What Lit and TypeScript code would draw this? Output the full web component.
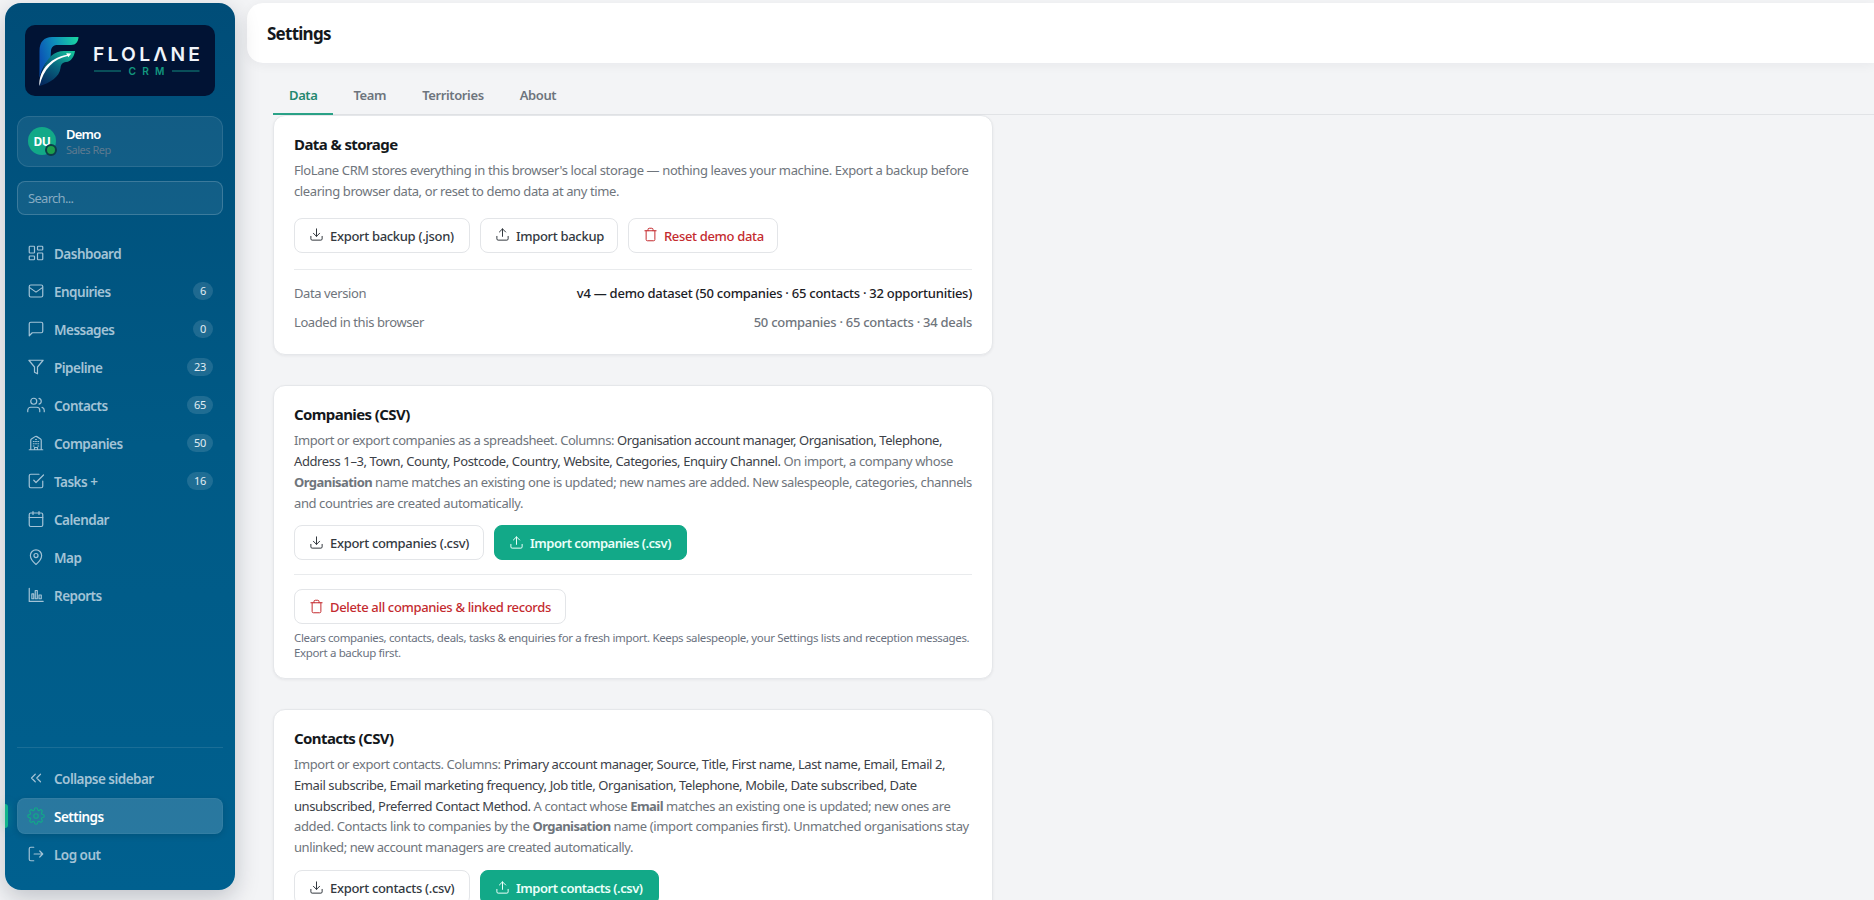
import { LitElement, html, css, svg, nothing, type TemplateResult } from "lit";
import { customElement, property } from "lit/decorators.js";
import { classMap } from "lit/directives/class-map.js";

const ICONS: Record<string, TemplateResult> = {
  dashboard: svg`<rect x="3" y="3" width="7" height="9" rx="1"/><rect x="14" y="3" width="7" height="5" rx="1"/><rect x="14" y="12" width="7" height="9" rx="1"/><rect x="3" y="16" width="7" height="5" rx="1"/>`,
  mail: svg`<rect x="3" y="4" width="18" height="16" rx="2"/><path d="m3.5 7.5 8.5 6 8.5-6"/>`,
  message: svg`<path d="M21 15a2 2 0 0 1-2 2H7l-4 4V5a2 2 0 0 1 2-2h14a2 2 0 0 1 2 2z"/>`,
  funnel: svg`<path d="M21.500 3h-19l7.500 9v7l4 2v-9z"/>`,
  users: svg`<path d="M17 21v-2a4 4 0 0 0-4-4H5a4 4 0 0 0-4 4v2"/><circle cx="9" cy="7" r="4"/><path d="M23 21v-2a4 4 0 0 0-3-3.87M16 3.13a4 4 0 0 1 0 7.75"/>`,
  building: svg`<path d="M3 21h18M5 21V8.500a2 2 0 0 1 .9-1.700l4.900-3.300a2.200 2.200 0 0 1 2.400 0l4.900 3.300a2 2 0 0 1 .9 1.700V21M10 21v-3h4v3M8.500 10h1M11.500 10h1M14.500 10h1M8.500 13h1M11.500 13h1M14.500 13h1M8.500 16h1M14.500 16h1M11.500 7.300h1"/>`,
  task: svg`<path d="m9 11 3 3L22 4"/><path d="M21 12v7a2 2 0 0 1-2 2H5a2 2 0 0 1-2-2V5a2 2 0 0 1 2-2h11"/>`,
  calendar: svg`<rect x="3" y="4" width="18" height="18" rx="2"/><path d="M16 2v4M8 2v4M3 10h18"/>`,
  pin: svg`<path d="M19.500 10c0 5.500-7.500 12-7.500 12S4.500 15.500 4.500 10a7.500 7.500 0 0 1 15 0z"/><circle cx="12" cy="10" r="2.700"/>`,
  chart: svg`<path d="M3 3v17.500h18.500"/><rect x="6.500" y="10.500" width="2.500" height="6.500"/><rect x="11" y="6" width="2.700" height="11"/><rect x="16" y="12" width="3" height="5"/>`,
  collapse: svg`<path d="m11 17-5-5 5-5M18 17l-5-5 5-5"/>`,
  gear: svg`<circle cx="12" cy="12" r="3"/><path d="M19.4 15a1.65 1.65 0 0 0 .33 1.82l.06.06a2 2 0 1 1-2.83 2.83l-.06-.06a1.65 1.65 0 0 0-2.8 1.17V21a2 2 0 1 1-4 0v-.09A1.65 1.65 0 0 0 9 19.4a1.65 1.65 0 0 0-1.82.33l-.06.06a2 2 0 1 1-2.83-2.83l.06-.06a1.65 1.65 0 0 0-1.17-2.8H3a2 2 0 1 1 0-4h.09A1.65 1.65 0 0 0 4.6 9a1.65 1.65 0 0 0-.33-1.82l-.06-.06a2 2 0 1 1 2.83-2.83l.06.06A1.65 1.65 0 0 0 9 4.6h.08A1.65 1.65 0 0 0 10 3.09V3a2 2 0 1 1 4 0v.09a1.65 1.65 0 0 0 2.82 1.18l.06-.06a2 2 0 1 1 2.83 2.83l-.06.06A1.65 1.65 0 0 0 19.4 9v.08A1.65 1.65 0 0 0 20.91 10H21a2 2 0 1 1 0 4h-.09a1.65 1.65 0 0 0-1.51 1z"/>`,
  logout: svg`<path d="M9 21H5a2 2 0 0 1-2-2V5a2 2 0 0 1 2-2h4M17 8l4 4-4 4M21 12H9.500"/>`,
  download: svg`<path d="M21 15v4a2 2 0 0 1-2 2H5a2 2 0 0 1-2-2v-4M7 10l5 5 5-5M12 15V3"/>`,
  upload: svg`<path d="M21 15v4a2 2 0 0 1-2 2H5a2 2 0 0 1-2-2v-4M17 8l-5-5-5 5M12 3v12"/>`,
  trash: svg`<path d="M3 6h18M5 6v14a2 2 0 0 0 2 2h10a2 2 0 0 0 2-2V6M8 6V4a2 2 0 0 1 2-2h4a2 2 0 0 1 2 2v2"/>`,
};

@customElement("ui-icon")
export class UiIcon extends LitElement {
  @property() name = "";
  static styles = css`
    :host { display: block; flex: none; width: 18px; height: 18px; }
    svg { display: block; width: 100%; height: 100%; fill: none; stroke: currentColor; stroke-width: 1.6; stroke-linecap: round; stroke-linejoin: round; }
  `;
  render() {
    return html`<svg viewBox="0 0 24 24">${ICONS[this.name] ?? nothing}</svg>`;
  }
}

@customElement("brand-logo")
export class BrandLogo extends LitElement {
  static styles = css`
    :host { display: block; width: 190px; height: 71px; border-radius: 10px; background: #011334; }
    svg { display: block; }
    .word { font: 600 19.3px Inter, sans-serif; fill: #f1f5fb; }
    .sub { font: 600 10.2px Inter, sans-serif; fill: #13977f; }
    .rule { stroke: #0c6466; stroke-width: 1.4; }
    .swoosh { fill: #fff; }
  `;
  render() {
    return html`<svg width="190" height="71" viewBox="25 25 190 71">
      <defs>
        <linearGradient id="top" x1="0" y1="0.5" x2="1" y2="0.2">
          <stop offset="0" stop-color="#0b52b4"/><stop offset=".45" stop-color="#0e8dbb"/><stop offset="1" stop-color="#19d3a2"/>
        </linearGradient>
        <linearGradient id="leg" x1="0.2" y1="1" x2="0.9" y2="0">
          <stop offset="0" stop-color="#052a5e"/><stop offset=".5" stop-color="#08667f"/><stop offset="1" stop-color="#14c39b"/>
        </linearGradient>
      </defs>
      <path fill="url(#top)" d="M39.500 78V51C39.500 42 44 37 52 37H78.500C78.300 41.500 76 45 71 45H58C53.500 45 51.500 47 51 50.500L50.500 58.500C45 62.500 41.500 69 39.500 78Z"/>
      <path fill="url(#leg)" d="M51 56C55 52.500 59 51 64 51H75C74 57 71 61.500 66 62C62 62.500 61 64.500 60.500 68C59.500 77 50 83 39.500 86C40 76 43 64 51 56Z"/>
      <path class="swoosh" d="M39.500 86C38.500 72 48 58.500 67 54.700L66.200 53.300L71.300 53.400L68.300 57.300L67.600 56C53.500 59 43.500 69 39.500 86Z"/>
      <text class="word" x="93" y="61" textLength="107">FLOLΛNE</text>
      <text class="sub" x="128.5" y="74.700" textLength="36">CRM</text>
      <path class="rule" d="M94 71h27M172 71h27.500"/>
    </svg>`;
  }
}

interface NavEntry { icon: string; label: string; badge?: string; active?: boolean; }

const MAIN_NAV: NavEntry[] = [
  { icon: "dashboard", label: "Dashboard" },
  { icon: "mail", label: "Enquiries", badge: "6" },
  { icon: "message", label: "Messages", badge: "0" },
  { icon: "funnel", label: "Pipeline", badge: "23" },
  { icon: "users", label: "Contacts", badge: "65" },
  { icon: "building", label: "Companies", badge: "50" },
  { icon: "task", label: "Tasks +", badge: "16" },
  { icon: "calendar", label: "Calendar" },
  { icon: "pin", label: "Map" },
  { icon: "chart", label: "Reports" },
];

const FOOT_NAV: NavEntry[] = [
  { icon: "collapse", label: "Collapse sidebar" },
  { icon: "gear", label: "Settings", active: true },
  { icon: "logout", label: "Log out" },
];

@customElement("app-sidebar")
export class AppSidebar extends LitElement {
  static styles = css`
    :host {
      display: flex; flex-direction: column; box-sizing: border-box; width: 230px; height: 887px; margin: 3px 0 0 5px;
      padding: 22px 12px 18px; border-radius: 16px; background: linear-gradient(180deg, #004d78, #005a86 50%, #00608f);
      box-shadow: 0 8px 24px rgba(15, 23, 42, .22); color: #a3c3d6; position: relative; z-index: 2;
    }
    brand-logo { margin: 0 8px; }
    .profile {
      display: flex; align-items: center; gap: 10px; box-sizing: border-box; height: 51px; margin-top: 20px; padding: 0 10px 1px;
      border: 1px solid rgba(255, 255, 255, .1); border-radius: 12px; background: rgba(255, 255, 255, .07);
    }
    .avatar {
      position: relative; display: grid; place-items: center; width: 28px; height: 28px; border-radius: 50%;
      background: #12a988; color: #fff; font-weight: 700; font-size: 12px; letter-spacing: -.4px;
    }
    .dot { position: absolute; right: -1px; bottom: -1px; width: 8px; height: 8px; border: 2px solid #0c3d4a; border-radius: 50%; background: #1d9e4b; }
    .name { color: #fff; font-weight: 600; font-size: 13px; line-height: 17px; letter-spacing: -.8px; }
    .role { color: #5d7a90; font-size: 11px; line-height: 14px; letter-spacing: -.5px; }
    .search {
      display: flex; align-items: center; box-sizing: border-box; height: 34px; margin: 14px 0 20px; padding: 0 10px;
      border: 1px solid rgba(255, 255, 255, .18); border-radius: 8px; background: rgba(255, 255, 255, .07);
      color: #86abc2; font-size: 13px; letter-spacing: -.7px;
    }
    .nav { display: flex; flex-direction: column; gap: 2px; }
    .foot { margin-top: auto; padding-top: 12px; border-top: 1px solid rgba(255, 255, 255, .1); }
    .item { position: relative; display: flex; align-items: center; box-sizing: border-box; height: 36px; padding: 0 10px 0 9.5px; border-radius: 8px; }
    .label { flex: 1; padding: 1px 0 0 9.5px; font-weight: 600; font-size: 13.5px; letter-spacing: -.52px; white-space: nowrap; }
    .badge { min-width: 6px; padding: 0 7px; border-radius: 9px; background: rgba(255, 255, 255, .12); color: #e2edf4; font-size: 11px; line-height: 18px; letter-spacing: -.3px; text-align: center; }
    .active { background: rgba(255, 255, 255, .16); box-shadow: 0 2px 6px rgba(0, 0, 0, .12), inset 0 0 0 1px rgba(255, 255, 255, .05); color: #fff; }
    .active ui-icon { color: #12a988; }
    .active::before { content: ""; position: absolute; left: -12px; top: 6px; width: 3px; height: 24px; border-radius: 0 3px 3px 0; background: #12b48c; box-shadow: 0 0 8px rgba(18, 180, 140, .5); }
  `;
  private item(e: NavEntry) {
    return html`<div class=${classMap({ item: true, active: !!e.active })}>
      <ui-icon name=${e.icon}></ui-icon><span class="label">${e.label}</span>
      ${e.badge ? html`<span class="badge">${e.badge}</span>` : nothing}
    </div>`;
  }
  render() {
    return html`
      <brand-logo></brand-logo>
      <div class="profile">
        <div class="avatar">DU<i class="dot"></i></div>
        <div><div class="name">Demo</div><div class="role">Sales Rep</div></div>
      </div>
      <div class="search">Search...</div>
      <div class="nav">${MAIN_NAV.map((e) => this.item(e))}</div>
      <div class="nav foot">${FOOT_NAV.map((e) => this.item(e))}</div>
    `;
  }
}

@customElement("action-button")
export class ActionButton extends LitElement {
  @property() icon = "";
  @property({ reflect: true }) kind = "plain";
  @property({ type: Number }) width = 0;
  static styles = css`
    :host { display: block; }
    .btn {
      display: flex; align-items: center; justify-content: flex-start; gap: 6.3px; box-sizing: border-box; height: 35px; padding: 0 0 0 13.7px;
      border: 1px solid #e3e5e8; border-radius: 8px; background: #fff; color: #33393f;
      font-weight: 500; font-size: 13px; letter-spacing: -.32px; white-space: nowrap;
    }
    ui-icon { width: 15px; height: 15px; margin-top: -1px; }
    .text { padding-top: 1px; }
    .danger { color: #c42b2f; letter-spacing: -.34px; }
    .primary { border-color: #12a988; background: #12a988; color: #eafff9; font-weight: 600; letter-spacing: -.48px; }
  `;
  render() {
    return html`<div class="btn ${this.kind}" style="width:${this.width}px">
      <ui-icon name=${this.icon}></ui-icon><span class="text"><slot></slot></span>
    </div>`;
  }
}

@customElement("settings-page")
export class SettingsPage extends LitElement {
  static styles = css`
    :host { display: block; flex: 1; min-width: 0; }
    .header {
      display: flex; align-items: center; box-sizing: border-box; height: 60px; margin: 3px 0 0 12px; padding: 1px 20px 0;
      border-radius: 16px 0 0 16px; background: #fff; box-shadow: 0 2px 12px rgba(15, 23, 42, .05);
      color: #14181c; font-weight: 700; font-size: 17px; letter-spacing: -.75px;
    }
    .body { padding: 12px 0 0 38px; }
    .tabs { display: flex; gap: 4px; box-sizing: border-box; height: 40px; border-bottom: 1px solid #e1e3e6; }
    .tab { box-sizing: border-box; height: 40px; padding: 11px 16px 0; border-bottom: 2px solid transparent; color: #6d747d; font-weight: 600; font-size: 13px; line-height: 18px; letter-spacing: -.38px; }
    .selected { border-color: #2aa287; color: #23876f; }
    .cards { display: flex; flex-direction: column; gap: 30.2px; width: 720px; }
    .card { box-sizing: border-box; padding: 20px 20px 18px; border: 1px solid #e5e7ea; border-radius: 12px; background: #fff; box-shadow: 0 1px 3px rgba(15, 23, 42, .06); }
    .title { color: #14181c; font-weight: 700; font-size: 15px; line-height: 16px; letter-spacing: -.59px; }
    .copy { margin-top: 8px; color: #6f757c; font-size: 13px; line-height: 20.8px; white-space: nowrap; }
    .line { display: block; }
    .cols { color: #3c4148; }
    b { font-weight: 700; letter-spacing: -.55px; }
    .row { display: flex; gap: 10px; margin-top: 12px; }
    .roomy { margin-top: 16.4px; }
    .rule { height: 1px; margin: 14px 0; background: #e9ebed; }
    .fact { display: flex; justify-content: space-between; height: 29px; align-items: center; color: #6f757c; font-size: 13px; letter-spacing: -.41px; }
    .facts { margin: 16px 0 -.5px; padding: 8.5px 0 0; border-top: 1px solid #e9ebed; }
    .value { font-weight: 500; letter-spacing: -.27px; }
    .strong { color: #1c2126; letter-spacing: -.25px; }
    .note { margin-top: 5.5px; color: #6b7280; font-size: 11.5px; line-height: 15px; letter-spacing: -.355px; white-space: nowrap; }
  `;
  private line(tracking: number, text: unknown) {
    return html`<span class="line" style="letter-spacing:${tracking}px">${text}</span>`;
  }
  render() {
    return html`
      <div class="header">Settings</div>
      <div class="body">
        <div class="tabs">
          <div class="tab selected">Data</div><div class="tab">Team</div><div class="tab">Territories</div><div class="tab">About</div>
        </div>
        <div class="cards">
          <section class="card">
            <div class="title">Data &amp; storage</div>
            <div class="copy">
              ${this.line(-0.377, "FloLane CRM stores everything in this browser's local storage — nothing leaves your machine. Export a backup before")}
              ${this.line(-0.394, "clearing browser data, or reset to demo data at any time.")}
            </div>
            <div class="row roomy">
              <action-button icon="download" width="176">Export backup (.json)</action-button>
              <action-button icon="upload" width="138">Import backup</action-button>
              <action-button icon="trash" kind="danger" width="150">Reset demo data</action-button>
            </div>
            <div class="facts">
              <div class="fact">Data version<span class="value strong">v4 — demo dataset (50 companies · 65 contacts · 32 opportunities)</span></div>
              <div class="fact">Loaded in this browser<span class="value">50 companies · 65 contacts · 34 deals</span></div>
            </div>
          </section>
          <section class="card">
            <div class="title">Companies (CSV)</div>
            <div class="copy">
              ${this.line(-0.433, html`Import or export companies as a spreadsheet. Columns: <span class="cols">Organisation account manager, Organisation, Telephone,</span>`)}
              ${this.line(-0.4, html`<span class="cols">Address 1–3, Town, County, Postcode, Country, Website, Categories, Enquiry Channel.</span> On import, a company whose`)}
              ${this.line(-0.412, html`<b>Organisation</b> name matches an existing one is updated; new names are added. New salespeople, categories, channels`)}
              ${this.line(-0.398, "and countries are created automatically.")}
            </div>
            <div class="row">
              <action-button icon="download" width="190">Export companies (.csv)</action-button>
              <action-button icon="upload" kind="primary" width="193">Import companies (.csv)</action-button>
            </div>
            <div class="rule"></div>
            <action-button icon="trash" kind="danger" width="272">Delete all companies &amp; linked records</action-button>
            <div class="note">
              <span class="line">Clears companies, contacts, deals, tasks &amp; enquiries for a fresh import. Keeps salespeople, your Settings lists and reception messages.</span>
              <span class="line">Export a backup first.</span>
            </div>
          </section>
          <section class="card">
            <div class="title">Contacts (CSV)</div>
            <div class="copy">
              ${this.line(-0.42, html`Import or export contacts. Columns: <span class="cols">Primary account manager, Source, Title, First name, Last name, Email, Email 2,</span>`)}
              ${this.line(-0.4, html`<span class="cols">Email subscribe, Email marketing frequency, Job title, Organisation, Telephone, Mobile, Date subscribed, Date</span>`)}
              ${this.line(-0.41, html`<span class="cols">unsubscribed, Preferred Contact Method.</span> A contact whose <b>Email</b> matches an existing one is updated; new ones are`)}
              ${this.line(-0.385, html`added. Contacts link to companies by the <b>Organisation</b> name (import companies first). Unmatched organisations stay`)}
              ${this.line(-0.425, "unlinked; new account managers are created automatically.")}
            </div>
            <div class="row">
              <action-button icon="download" width="176">Export contacts (.csv)</action-button>
              <action-button icon="upload" kind="primary" width="179">Import contacts (.csv)</action-button>
            </div>
          </section>
        </div>
      </div>
    `;
  }
}

@customElement("app-root")
export class AppRoot extends LitElement {
  static styles = css`
    :host { display: flex; align-items: flex-start; height: 100vh; overflow: hidden; background: #f3f4f6; font-family: "Noto Sans", "Open Sans", sans-serif; }
  `;
  render() {
    return html`<app-sidebar></app-sidebar><settings-page></settings-page>`;
  }
}
